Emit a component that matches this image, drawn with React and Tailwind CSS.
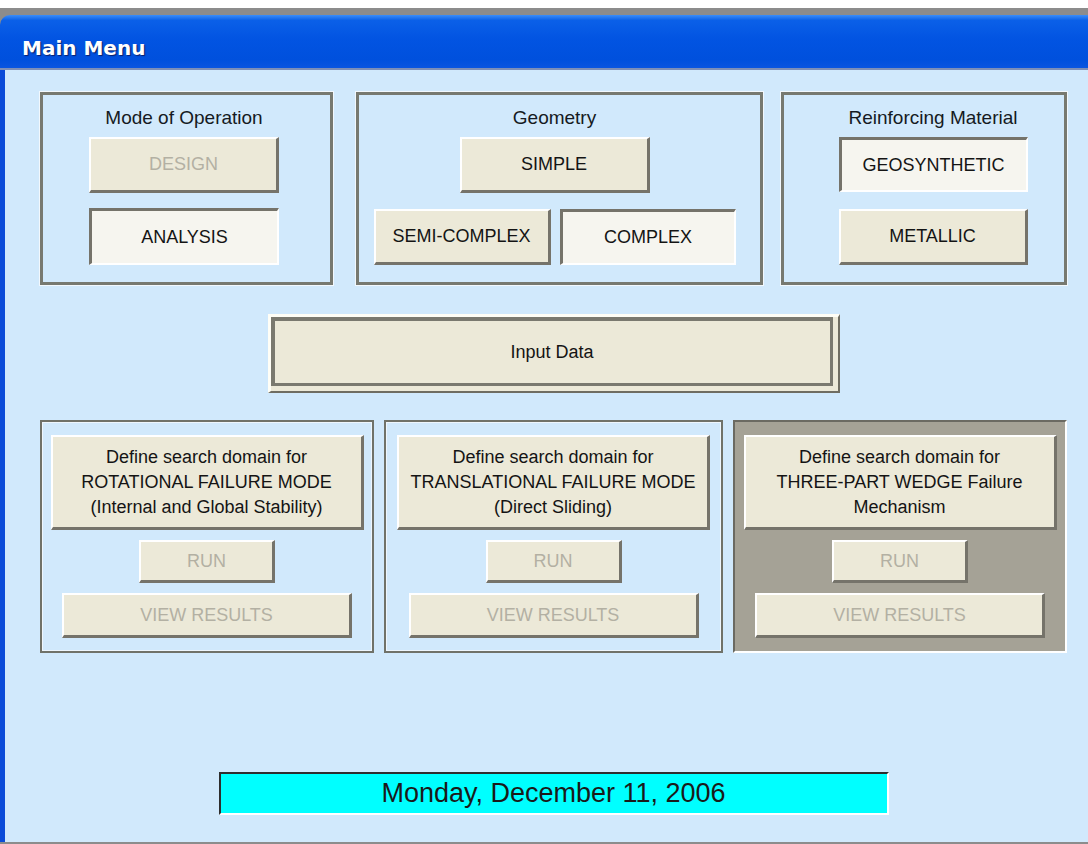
import React from 'react';

const raised = 'border-t-2 border-l-2 border-r-[3px] border-b-[3px] border-t-white border-l-white border-r-[#75736a] border-b-[#75736a] bg-[#ece9d8]';
const pressed = 'border-t-[3px] border-l-[3px] border-r-2 border-b-2 border-t-[#75736a] border-l-[#75736a] border-r-white border-b-white bg-[#f6f5ef]';

function Btn({ children, className = '', down = false, disabled = false }) {
    return (
        <div
            className={`flex items-center justify-center text-center text-[18px] leading-[25px] ${down ? pressed : raised} ${disabled ? 'text-[#b3b0a3]' : 'text-[#141414]'} ${className}`}
        >
            {children}
        </div>
    );
}

function Group({ title, className = '', children }) {
    return (
        <div className={`flex flex-col items-center border-[3px] border-[#777970] shadow-[0_0_0_1px_#f2f8fd] pt-[12px] ${className}`}>
            <div className='text-[19px] leading-[22px] text-[#151a22]'>{title}</div>
            {children}
        </div>
    );
}

function SearchGroup({ lines, active = false, className = '' }) {
    const frame = active
        ? 'border-t-2 border-l-2 border-t-[#6b6a62] border-l-[#6b6a62] border-r-2 border-b-2 border-r-white border-b-white bg-[#a5a296]'
        : 'border-2 border-[#707269] shadow-[inset_0_0_0_1px_#eef6fd]';
    return (
        <div className={`flex flex-col items-center pt-[13px] h-[233px] ${frame} ${className}`}>
            <Btn className='w-[313px] h-[95px]'>
                <div>
                    {lines.map((l) => (
                        <div key={l}>{l}</div>
                    ))}
                </div>
            </Btn>
            <Btn disabled className='w-[136px] h-[43px] mt-[10px]'>RUN</Btn>
            <Btn disabled className='w-[290px] h-[45px] mt-[10px]'>VIEW RESULTS</Btn>
        </div>
    );
}

export default function App() {
    return (
        <div className='w-[1088px] h-[844px] bg-white pt-[8px] overflow-hidden' style={{ fontFamily: '"Liberation Sans", Arial, sans-serif' }}>
            <div className='h-full bg-[#8c8c8c] pt-[7px] flex flex-col'>
                {/* title bar */}
                <div className='h-[53px] rounded-tl-[10px] bg-[linear-gradient(180deg,#3b8df9_0%,#0b60e8_10%,#0254e2_45%,#0050dd_85%,#0a55e0_100%)] flex items-center pl-[22px] pt-[12px]'>
                    <span
                        className='text-white font-bold text-[20px] [text-shadow:1px_1px_1px_#0a1f6a]'
                        style={{ fontFamily: '"DejaVu Sans", sans-serif' }}
                    >
                        Main Menu
                    </span>
                </div>
                <div className='h-[2px] bg-[#7d8fb8]' />

                {/* client area */}
                <div className='flex-1 border-l-[5px] border-[#0b4bd8] bg-[#d1e9fc] pl-[35px] pt-[22px]'>
                    <div className='w-[1027px] flex flex-col items-center'>
                        <div className='flex w-full'>
                            <Group title='Mode of Operation' className='w-[293px] h-[193px] pr-[5px]'>
                                <Btn disabled className='w-[190px] h-[56px] mt-[8px]'>DESIGN</Btn>
                                <Btn down className='w-[190px] h-[57px] mt-[15px]'>ANALYSIS</Btn>
                            </Group>
                            <Group title='Geometry' className='w-[407px] h-[193px] ml-[23px] pr-[10px]'>
                                <Btn className='w-[190px] h-[56px] mt-[8px]'>SIMPLE</Btn>
                                <div className='flex gap-[9px] mt-[16px]'>
                                    <Btn className='w-[177px] h-[56px]'>SEMI-COMPLEX</Btn>
                                    <Btn down className='w-[176px] h-[56px]'>COMPLEX</Btn>
                                </div>
                            </Group>
                            <Group title='Reinforcing Material' className='w-[286px] h-[193px] ml-[18px] pl-[18px]'>
                                <Btn down className='w-[189px] h-[55px] mt-[8px]'>GEOSYNTHETIC</Btn>
                                <Btn className='w-[189px] h-[56px] mt-[17px]'>METALLIC</Btn>
                            </Group>
                        </div>

                        <div className='mt-[29px] w-[572px] h-[79px] border-t-[3px] border-l-[3px] border-t-[#fffef6] border-l-[#fffef6] border-r-2 border-b-2 border-r-[#6f6d62] border-b-[#6f6d62] bg-[#ece9d8] pr-[5px] pb-[5px]'>
                            <div className='h-full border-[3px] border-t-[4px] border-l-[4px] border-[#7a796f] flex items-center justify-center text-[18px] text-[#141414]'>
                                Input Data
                            </div>
                        </div>

                        <div className='flex w-full mt-[27px]'>
                            <SearchGroup
                                className='w-[334px]'
                                lines={['Define search domain for', 'ROTATIONAL FAILURE MODE', '(Internal and Global Stability)']}
                            />
                            <SearchGroup
                                className='w-[339px] ml-[10px]'
                                lines={['Define search domain for', 'TRANSLATIONAL FAILURE MODE', '(Direct Sliding)']}
                            />
                            <SearchGroup
                                active
                                className='w-[334px] ml-[10px]'
                                lines={['Define search domain for', 'THREE-PART WEDGE Failure', 'Mechanism']}
                            />
                        </div>

                        <div className='mt-[119px] w-[670px] h-[43px] border-2 border-t-[#2e2e2e] border-l-[#2e2e2e] border-r-white border-b-white bg-[#00ffff] flex items-center justify-center text-[27px] text-[#1a1a1a]'>
                            Monday, December 11, 2006
                        </div>
                    </div>
                </div>
                <div className='h-[2px] bg-[#8c8c8c]' />
            </div>
        </div>
    );
}
